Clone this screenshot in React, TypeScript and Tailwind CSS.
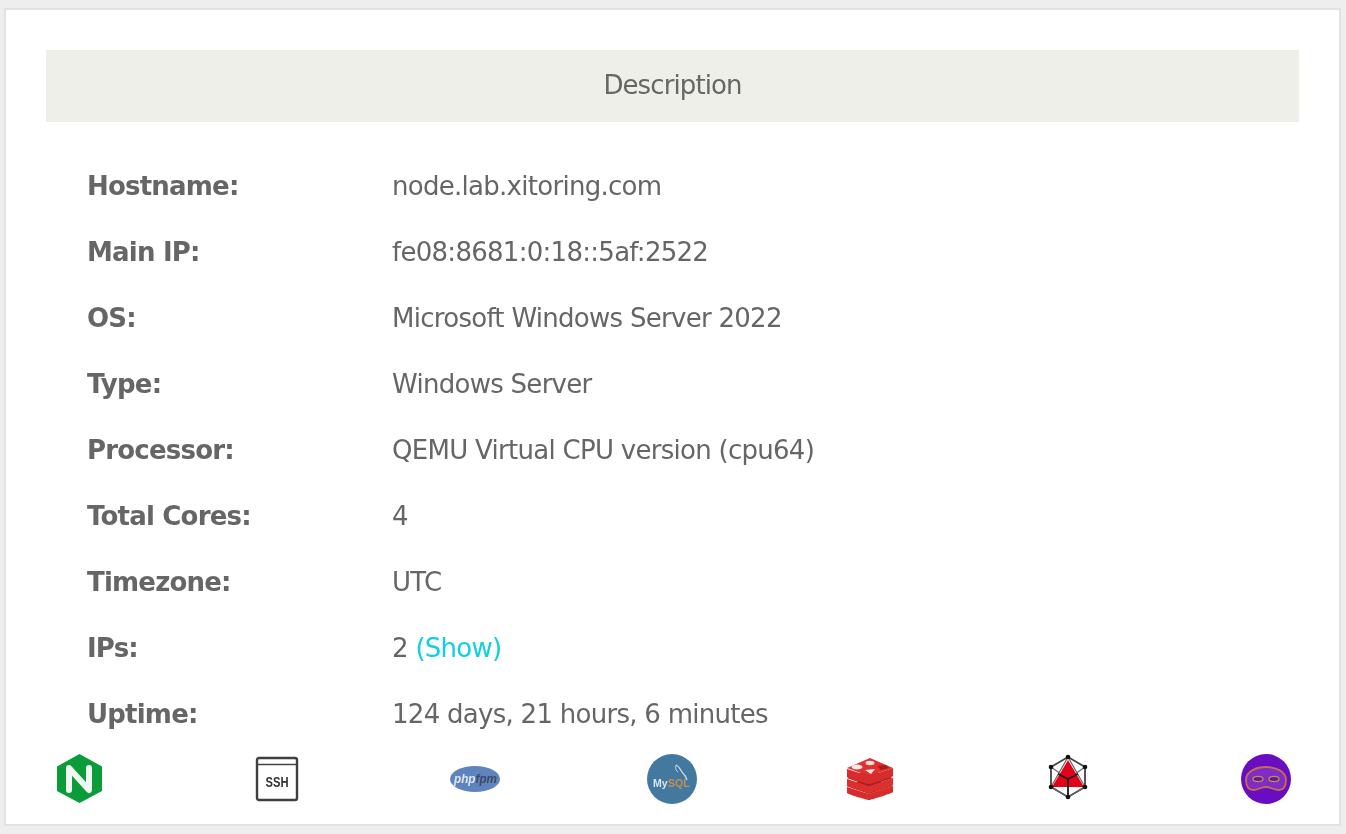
const rows: [string, React.ReactNode][] = [
  ["Hostname:", "node.lab.xitoring.com"],
  ["Main IP:", "fe08:8681:0:18::5af:2522"],
  ["OS:", "Microsoft Windows Server 2022"],
  ["Type:", "Windows Server"],
  ["Processor:", "QEMU Virtual CPU version (cpu64)"],
  ["Total Cores:", "4"],
  ["Timezone:", "UTC"],
  ["IPs:", <>2 <a className="text-[#0fd0e0]">(Show)</a></>],
  ["Uptime:", "124 days, 21 hours, 6 minutes"],
];

function Nginx() {
  return (
    <svg viewBox="0 0 50 50" className="w-[50px] h-[50px] blur-[0.6px]">
      <polygon points="25.5,0 48,12.5 48,37 25.5,49 3,37 3,12.5" fill="#0a9c38" strokeLinejoin="round" />
      <path d="M15 36V14L35 36V14" fill="none" stroke="#f0f8f2" strokeWidth="6" strokeLinejoin="round" strokeLinecap="round" />
    </svg>
  );
}
function Ssh() {
  return (
    <svg viewBox="0 0 50 50" className="w-[50px] h-[50px] blur-[0.5px]">
      <rect x="5" y="4" width="40" height="42" rx="2" fill="#fff" stroke="#3f3f3f" strokeWidth="2.400" />
      <line x1="5" y1="10.500" x2="45" y2="10.500" stroke="#444" strokeWidth="1.500" />
      <text x="25" y="33" textAnchor="middle" fontSize="15" fontWeight="700" fill="#333" textLength="23" lengthAdjust="spacingAndGlyphs" fontFamily="Liberation Sans, sans-serif">SSH</text>
    </svg>
  );
}
function Php() {
  return (
    <svg viewBox="0 0 50 50" className="w-[50px] h-[50px] blur-[0.7px]">
      <ellipse cx="25" cy="25" rx="25" ry="13" fill="#5f83bd" />
      <text x="4" y="29" fontSize="13" fontStyle="italic" fontWeight="700" fill="#dfe6f3" textLength="43" lengthAdjust="spacingAndGlyphs" fontFamily="Liberation Sans, sans-serif">
        php<tspan fill="#3c4a62">fpm</tspan>
      </text>
    </svg>
  );
}
function Mysql() {
  return (
    <svg viewBox="0 0 50 50" className="w-[50px] h-[50px] blur-[0.6px]">
      <circle cx="25" cy="25" r="25" fill="#44799f" />
      <path d="M29 11c3 1 4 4 6 7 2 2 4 4 5 8" fill="none" stroke="#c6d6e2" strokeWidth="1.300" />
      <path d="M29 11c-1 3 0 6 2 7" fill="none" stroke="#c6d6e2" strokeWidth="1" />
      <text x="6" y="33" fontSize="10.500" fontWeight="700" fill="#dbe5ee" fontFamily="Liberation Sans, sans-serif">My</text>
      <text x="21" y="33" fontSize="10.500" fontWeight="700" fill="#c58f52" fontFamily="Liberation Sans, sans-serif">SQL</text>
    </svg>
  );
}
function Redis() {
  return (
    <svg viewBox="0 0 50 50" className="w-[50px] h-[50px] blur-[0.5px]">
      <path d="M2 33v6c0 1 20 7 22 7s24-7 24-8v-6l-24 8z" fill="#d62c2b" />
      <path d="M2 32l22-8 24 8-24 8z" fill="#a81e20" />
      <path d="M2 25v7c0 1 20 7 22 7s24-7 24-8v-7l-24 8z" fill="#dc2f2e" />
      <path d="M2 24l22-8 24 8-24 8z" fill="#a81e20" />
      <path d="M2 15v8c0 1 20 7 22 7s24-7 24-8v-8l-24 8z" fill="#d62c2b" />
      <path d="M2 14l23-10 23 10-24 8z" fill="#e2302f" />
      <ellipse cx="12" cy="13" rx="5.500" ry="2.400" fill="#fbe9e9" />
      <ellipse cx="25" cy="9" rx="4.500" ry="2.200" fill="#f8dada" />
      <path d="M20 16l10-1-4 5z" fill="#fbe9e9" />
      <path d="M32 12l9-1 3 3-8 2z" fill="#a51d1f" />
    </svg>
  );
}
function Net() {
  const pts: [number, number][] = [[25, 3], [42, 13], [42, 33], [25, 43], [8, 33], [8, 13]];
  return (
    <svg viewBox="0 0 50 50" className="w-[50px] h-[50px] blur-[0.4px]">
      <polygon points={pts.map((p) => p.join(",")).join(" ")} fill="none" stroke="#444" strokeWidth="1.800" />
      <path d="M25 3L8 33M25 3L42 33M8 13L25 25L42 13M25 25V43M8 33L25 43L42 33" fill="none" stroke="#666" strokeWidth="1.200" />
      <polygon points="25,6 41,33 9,33" fill="#e0021b" />
      <path d="M25 25L15 20M25 25L35 20M25 25V43" stroke="#222" strokeWidth="1.800" />
      {pts.map((p) => <circle key={p.join()} cx={p[0]} cy={p[1]} r="2.300" fill="#111" />)}
    </svg>
  );
}
function Mask() {
  return (
    <svg viewBox="0 0 50 50" className="w-[50px] h-[50px] blur-[0.5px]">
      <circle cx="25" cy="25" r="25" fill="#6a0cc0" />
      <path d="M5 26c0-9 11-13 20-13s20 4 20 13c0 7-3 10-7 10-5 0-8-3-13-3s-8 3-13 3c-4 0-7-3-7-10z" fill="#7f2bc4" stroke="#c0704f" strokeWidth="1.800" />
      <ellipse cx="17" cy="25" rx="5" ry="2.600" fill="#5a1a9c" stroke="#c48a50" strokeWidth="1.300" />
      <ellipse cx="33" cy="25" rx="5" ry="2.600" fill="#5a1a9c" stroke="#c48a50" strokeWidth="1.300" />
    </svg>
  );
}

export default function App() {
  return (
    <div className="h-[834px] w-[1346px] overflow-hidden bg-[#eeeeee] pt-[8px] pl-[4px] text-[#666666]" style={{ fontFamily: '"DejaVu Sans", sans-serif' }}>
      <div className="h-[818px] w-[1337px] border-2 border-[#e2e2e2] bg-white pt-[40px] pl-[40px]">
        <div className="flex h-[72px] w-[1253px] items-center justify-center bg-[#eeefe9] pb-[2px] text-[26px] tracking-[-0.9px]">
          <span className="blur-[0.3px]">Description</span>
        </div>
        <div className="pt-[32px] pl-[41px]">
          {rows.map(([k, v]) => (
            <div key={k} className="flex h-[66px] items-center pb-[2px] text-[26px] tracking-[-0.72px] blur-[0.3px]">
              <div className="w-[305px] font-bold tracking-[-0.8px]">{k}</div>
              <div>{v}</div>
            </div>
          ))}
        </div>
        <div className="mt-[6px] ml-[8px] flex w-[1237px] justify-between">
          <Nginx /><Ssh /><Php /><Mysql /><Redis /><Net /><Mask />
        </div>
      </div>
    </div>
  );
}
